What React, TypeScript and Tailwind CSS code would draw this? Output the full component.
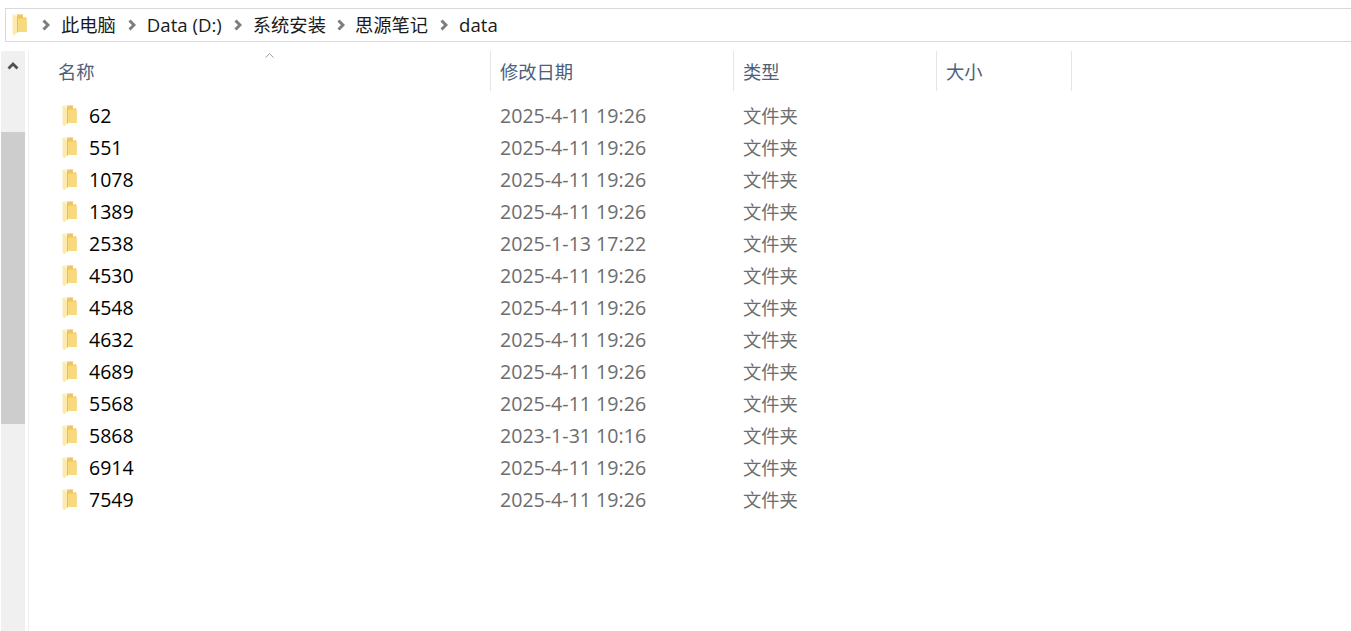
import { ChevronUp } from 'lucide-react';

const rows = [
  { name: '62', date: '2025-4-11 19:26' },
  { name: '551', date: '2025-4-11 19:26' },
  { name: '1078', date: '2025-4-11 19:26' },
  { name: '1389', date: '2025-4-11 19:26' },
  { name: '2538', date: '2025-1-13 17:22' },
  { name: '4530', date: '2025-4-11 19:26' },
  { name: '4548', date: '2025-4-11 19:26' },
  { name: '4632', date: '2025-4-11 19:26' },
  { name: '4689', date: '2025-4-11 19:26' },
  { name: '5568', date: '2025-4-11 19:26' },
  { name: '5868', date: '2023-1-31 10:16' },
  { name: '6914', date: '2025-4-11 19:26' },
  { name: '7549', date: '2025-4-11 19:26' },
];

const crumbs = [
  { label: '此电脑', latin: false, gap: 'ml-[15px] mr-[11px]' },
  { label: 'Data (D:)', latin: true, gap: 'ml-[12px] mr-[11px]' },
  { label: '系统安装', latin: false, gap: 'ml-[12px] mr-[11px]' },
  { label: '思源笔记', latin: false, gap: 'ml-[11px] mr-[10px]' },
  { label: 'data', latin: true, gap: 'ml-[12px] mr-[11px]' },
];

function FolderIcon() {
  return (
    <svg width="15" height="22" viewBox="0 0 15 22" className="shrink-0">
      <path d="M1 0.500H11V3.500H14.500V18H5V1z" fill="#eec560" />
      <path d="M6 4.500H14.500V18H6z" fill="#f8d97c" />
      <path d="M0.500 0.500L5.500 2.500V18.500L2 21.500L0.500 19z" fill="#fcebac" />
      <path d="M5.500 2.500V18.500" stroke="#e3b955" strokeWidth="0.8" />
    </svg>
  );
}

function Chevron() {
  return (
    <svg width="8" height="12" viewBox="0 0 8 12" className="shrink-0">
      <path d="M1.500 1.500L6 6l-4.500 4.500" fill="none" stroke="#7d7d7d" strokeWidth="3" />
    </svg>
  );
}

export default function App() {
  return (
    <div className="h-[631px] w-[1351px] overflow-hidden bg-white font-['Open_Sans','Noto_Sans_CJK_SC',sans-serif]">
      <div className="pl-[5px] pt-2">
        <div className="flex h-[34px] items-center border border-r-0 border-[#d9d9d9] pl-[6px] text-[18.3px] text-[#1a1a1a]">
          <FolderIcon />
          {crumbs.map((c) => (
            <div key={c.label} className="contents">
              <div className={c.gap}>
                <Chevron />
              </div>
              <span className={c.latin ? 'whitespace-nowrap text-[18.6px]' : 'whitespace-nowrap'}>{c.label}</span>
            </div>
          ))}
        </div>
      </div>

      <div className="mt-[9px] flex h-[580px]">
        <div className="ml-px flex w-6 shrink-0 flex-col bg-[#f0f0f0]">
          <div className="flex h-[81px] justify-center pt-[10px]">
            <svg width="12" height="9" viewBox="0 0 12 9">
              <path d="M1.500 7.500L6 3l4.500 4.500" fill="none" stroke="#505050" strokeWidth="2.800" />
            </svg>
          </div>
          <div className="h-[292px] bg-[#cdcdcd]" />
        </div>
        <div className="ml-[3px] w-px bg-[#f0f0f0]" />

        <div className="min-w-0 flex-1">
          <div className="flex h-10 text-[18.3px] text-[#4c607a]">
            <div className="relative flex w-[461px] items-center pl-[29px] pt-[2px]">
              名称
              <ChevronUp size={15} strokeWidth={1.2} className="absolute left-[233px] top-[-3px] text-[#7a7a7a]" />
            </div>
            <div className="flex w-[243px] items-center border-l border-[#e5e5e5] pl-[9px] pt-[2px]">修改日期</div>
            <div className="flex w-[203px] items-center border-l border-[#e5e5e5] pl-[9px] pt-[2px]">类型</div>
            <div className="flex w-[135px] items-center border-l border-[#e5e5e5] pl-[9px] pt-[2px]">大小</div>
            <div className="border-l border-[#e5e5e5]" />
          </div>

          <div className="pt-[9px]">
            {rows.map((r) => (
              <div key={r.name} className="flex h-8 items-center text-[#6d6d6d]">
                <div className="flex w-[461px] items-center gap-[12px] pl-[33px] text-[19.5px] text-[#000000]">
                  <FolderIcon />
                  <span>{r.name}</span>
                </div>
                <div className="w-[243px] pl-[10px] text-[19.6px]">{r.date}</div>
                <div className="pl-[10px] text-[18.3px]">文件夹</div>
              </div>
            ))}
          </div>
        </div>
      </div>
    </div>
  );
}
